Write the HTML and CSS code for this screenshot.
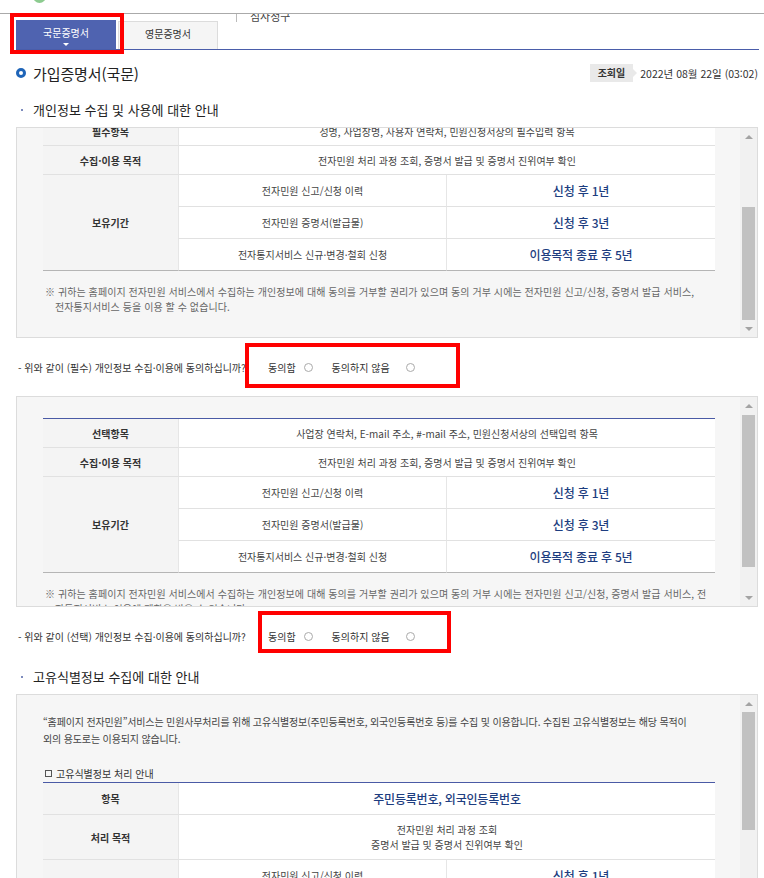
FILE: index.html
```html
<!DOCTYPE html>
<html lang="ko">
<head>
	<meta charset="UTF-8">
	<title>가입증명서(국문)</title>
	<link rel="stylesheet" href="styles.css">
</head>
<body>
	<div class="gnb"><span class="logo"></span></div>
	<div class="tabbar">
		<div class="tab on">국문증명서<i class="caret"></i></div>
		<div class="tab">영문증명서</div>
		<div class="submenu"><span>심사청구</span></div>
		<div class="mark mark-tab"></div>
	</div>

	<div class="wrap">
		<div class="tit">
			<h2><i class="ring"></i>가입증명서(국문)</h2>
			<div class="date"><span class="lbl">조회일</span><span class="tri"></span>2022년 08월 22일 (03:02)</div>
		</div>

		<h3 class="stit"><i class="dot"></i>개인정보 수집 및 사용에 대한 안내</h3>
		<div class="scrollbox">
			<div class="view">
				<div class="inner scrolled">
					<table class="tbl">
						<colgroup><col class="c1"><col class="c2"><col class="c3"></colgroup>
						<tr class="r1"><th>필수항목</th><td colspan="2">성명, 사업장명, 사용자 연락처, 민원신청서상의 필수입력 항목</td></tr>
						<tr class="r1"><th>수집·이용 목적</th><td colspan="2">전자민원 처리 과정 조회, 증명서 발급 및 증명서 진위여부 확인</td></tr>
						<tr class="r2"><th rowspan="3" class="last">보유기간</th><td>전자민원 신고/신청 이력</td><td class="val">신청 후 1년</td></tr>
						<tr class="r2"><td>전자민원 증명서(발급물)</td><td class="val">신청 후 3년</td></tr>
						<tr class="r2 last"><td>전자통지서비스 신규·변경·철회 신청</td><td class="val">이용목적 종료 후 5년</td></tr>
					</table>
					<p class="note">※ 귀하는 홈페이지 전자민원 서비스에서 수집하는 개인정보에 대해 동의를 거부할 권리가 있으며 동의 거부 시에는 전자민원 신고/신청, 증명서 발급 서비스,<br>전자통지서비스 등을 이용 할 수 없습니다.</p>
				</div>
			</div>
			<div class="sbar"><span class="up"></span><span class="track"><i class="thumb t1"></i></span><span class="down"></span></div>
		</div>

		<div class="agree">
			<span class="q">- 위와 같이 (필수) 개인정보 수집·이용에 동의하십니까?</span>
			<span>동의함</span><i class="radio"></i>
			<span class="opt2">동의하지 않음</span><i class="radio wide"></i>
			<div class="mark mark-a1"></div>
		</div>

		<div class="scrollbox">
			<div class="view">
				<div class="inner">
					<table class="tbl">
						<colgroup><col class="c1"><col class="c2"><col class="c3"></colgroup>
						<tr class="r1"><th>선택항목</th><td colspan="2">사업장 연락처, E-mail 주소, #-mail 주소, 민원신청서상의 선택입력 항목</td></tr>
						<tr class="r1"><th>수집·이용 목적</th><td colspan="2">전자민원 처리 과정 조회, 증명서 발급 및 증명서 진위여부 확인</td></tr>
						<tr class="r2"><th rowspan="3" class="last">보유기간</th><td>전자민원 신고/신청 이력</td><td class="val">신청 후 1년</td></tr>
						<tr class="r2"><td>전자민원 증명서(발급물)</td><td class="val">신청 후 3년</td></tr>
						<tr class="r2 last"><td>전자통지서비스 신규·변경·철회 신청</td><td class="val">이용목적 종료 후 5년</td></tr>
					</table>
					<p class="note">※ 귀하는 홈페이지 전자민원 서비스에서 수집하는 개인정보에 대해 동의를 거부할 권리가 있으며 동의 거부 시에는 전자민원 신고/신청, 증명서 발급 서비스, 전<br>자통지서비스 이용에 제한을 받을 수 있습니다.</p>
				</div>
			</div>
			<div class="sbar"><span class="up"></span><span class="track"><i class="thumb t2"></i></span><span class="down"></span></div>
		</div>

		<div class="agree">
			<span class="q">- 위와 같이 (선택) 개인정보 수집·이용에 동의하십니까?</span>
			<span>동의함</span><i class="radio"></i>
			<span class="opt2">동의하지 않음</span><i class="radio wide"></i>
			<div class="mark mark-a2"></div>
		</div>

		<h3 class="stit near"><i class="dot"></i>고유식별정보 수집에 대한 안내</h3>
		<div class="scrollbox">
			<div class="view">
				<div class="inner top">
					<p class="intro">“홈페이지 전자민원”서비스는 민원사무처리를 위해 고유식별정보(주민등록번호, 외국인등록번호 등)를 수집 및 이용합니다. 수집된 고유식별정보는 해당 목적이<br>외의 용도로는 이용되지 않습니다.</p>
					<p class="subt"><i class="sq"></i>고유식별정보 처리 안내</p>
					<table class="tbl">
						<colgroup><col class="c1"><col class="c2"><col class="c3"></colgroup>
						<tr class="r3"><th>항목</th><td colspan="2" class="val">주민등록번호, 외국인등록번호</td></tr>
						<tr class="r4"><th>처리 목적</th><td colspan="2">전자민원 처리 과정 조회<br>증명서 발급 및 증명서 진위여부 확인</td></tr>
						<tr class="r2"><th rowspan="3" class="last">보유기간</th><td>전자민원 신고/신청 이력</td><td class="val">신청 후 1년</td></tr>
						<tr class="r2"><td>전자민원 증명서(발급물)</td><td class="val">신청 후 3년</td></tr>
						<tr class="r2 last"><td>전자통지서비스 신규·변경·철회 신청</td><td class="val">이용목적 종료 후 5년</td></tr>
					</table>
				</div>
			</div>
			<div class="sbar"><span class="up"></span><span class="track"><i class="thumb t3"></i></span><span class="down"></span></div>
		</div>
	</div>
</body>
</html>
```

FILE: styles.css
```css
*{
	margin: 0;
	padding: 0;
}
body{
	font-family: "Noto Sans CJK KR", "Malgun Gothic", sans-serif;
	color: #333;
	background: #fff;
}
i{
	font-style: normal;
}

/* top strip */
.gnb{
	height: 13px;
	border-bottom: 1px solid #aaa;
	overflow: hidden;
}
.gnb .logo{
	display: block;
	width: 13px;
	height: 13px;
	border-radius: 50%;
	background: #8ccb8f;
	margin: -10px 0 0 33px;
}

/* tabs */
.tabbar{
	display: flex;
	align-items: flex-end;
	height: 35px;
	margin: 0 5px 0 16px;
	border-bottom: 1px solid #4a5daa;
	position: relative;
}
.tab{
	width: 100px;
	height: 28px;
	box-sizing: border-box;
	border: 1px solid #dcdcdc;
	border-bottom: none;
	background: #f5f5f5;
	margin-left: 2px;
	padding-top: 5px;
	font-size: 10px;
	line-height: 14px;
	text-align: center;
	color: #333;
}
.tab.on{
	height: 29px;
	border: none;
	background: #4f63b0;
	color: #fff;
	margin-left: 0;
	padding-top: 6px;
}
.tab .caret{
	display: block;
	width: 0;
	margin: 3px auto 0;
	border-left: 3px solid transparent;
	border-right: 3px solid transparent;
	border-top: 3px solid #fff;
}
.submenu{
	align-self: flex-start;
	height: 8px;
	overflow: hidden;
	border-left: 1px solid #bbb;
	margin-left: 18px;
	padding-left: 13px;
}
.submenu span{
	display: block;
	font-size: 11px;
	line-height: 11px;
	margin-top: -3px;
	color: #444;
}

/* red annotation boxes */
.mark{
	position: absolute;
	box-sizing: border-box;
	border: 4px solid #f00;
}
.mark-tab{
	left: -6px;
	top: -1px;
	width: 114px;
	height: 41px;
}
.mark-a1{
	left: 229px;
	top: 5px;
	width: 215px;
	height: 45px;
}
.mark-a2{
	left: 242px;
	top: 4px;
	width: 193px;
	height: 42px;
}

.wrap{
	margin: 0 6px 0 16px;
}

/* title */
.tit{
	display: flex;
	justify-content: space-between;
	align-items: center;
	height: 26px;
	margin-top: 10px;
}
.tit h2{
	display: flex;
	align-items: center;
	font-size: 15px;
	font-weight: 400;
	letter-spacing: -0.1px;
	color: #222;
}
.tit .ring{
	display: inline-block;
	width: 10px;
	height: 10px;
	box-sizing: border-box;
	border: 3px solid #1f65b8;
	border-radius: 50%;
	margin-right: 7px;
}
.date{
	display: flex;
	align-items: center;
	font-size: 10.5px;
	color: #333;
}
.date .lbl{
	height: 18px;
	line-height: 18px;
	padding: 0 8px;
	background: #e9e9e9;
	font-size: 10px;
	font-weight: 700;
}
.date .tri{
	width: 0;
	border-left: 4px solid #e9e9e9;
	border-top: 4px solid transparent;
	border-bottom: 4px solid transparent;
	margin-right: 3px;
}

/* section heading */
.stit{
	display: flex;
	align-items: center;
	margin: 14px 0 7px;
	padding-left: 5px;
	line-height: 20px;
	font-size: 13px;
	font-weight: 400;
	color: #222;
}
.stit.near{
	margin-top: 2px;
}
.stit .dot{
	width: 2px;
	height: 2px;
	background: #7d8bbd;
	margin-right: 10px;
}

/* fake scrolling boxes */
.scrollbox{
	display: flex;
	height: 211px;
	box-sizing: border-box;
	border: 1px solid #dcdcdc;
	background: #f6f6f6;
}
.view{
	flex: 1;
	overflow: hidden;
}
.inner{
	padding: 21px 25px 20px 26px;
}
.inner.scrolled{
	margin-top: -33px;
}
.inner.top{
	padding-top: 18px;
}
.sbar{
	width: 17px;
	display: flex;
	flex-direction: column;
	background: #f1f1f1;
}
.sbar .up,
.sbar .down{
	height: 17px;
	display: flex;
	align-items: center;
	justify-content: center;
}
.sbar .up:before,
.sbar .down:before{
	content: "";
	width: 0;
	border-left: 4px solid transparent;
	border-right: 4px solid transparent;
}
.sbar .up:before{
	border-bottom: 4px solid #a3a3a3;
}
.sbar .down:before{
	border-top: 4px solid #a3a3a3;
}
.sbar .track{
	flex: 1;
	display: block;
	overflow: hidden;
}
.thumb{
	display: block;
	margin: 0 2px;
	background: #c1c1c1;
}
.t1{
	margin-top: 62px;
	height: 113px;
}
.t2{
	margin-top: 1px;
	height: 152px;
}
.t3{
	height: 118px;
}

/* table */
.tbl{
	width: 100%;
	table-layout: fixed;
	border-collapse: separate;
	border-spacing: 0;
	border-top: 1px solid #4a5aa5;
	background: #fff;
	font-size: 10px;
}
.tbl .c1{
	width: 135px;
}
.tbl .c2{
	width: 268px;
}
.tbl th,
.tbl td{
	padding: 0;
	text-align: center;
	border-bottom: 1px solid #e1e1e1;
}
.tbl th{
	background: #f4f4f4;
	font-weight: 700;
	color: #333;
}
.tbl td{
	border-left: 1px solid #e6e6e6;
	color: #444;
	line-height: 15px;
}
.tbl .r1 th,
.tbl .r1 td{
	height: 28px;
}
.tbl .r2 th,
.tbl .r2 td{
	height: 31px;
}
.tbl .r3 th,
.tbl .r3 td{
	height: 31px;
}
.tbl .r4 th,
.tbl .r4 td{
	height: 44px;
}
.tbl .last td,
.tbl th.last{
	border-bottom-color: #b5b5b5;
}
.tbl td.val{
	font-size: 12px;
	font-weight: 500;
	letter-spacing: -0.2px;
	color: #1d3d80;
}

.note{
	padding: 13px 0 0 12px;
	text-indent: -10px;
	line-height: 15px;
	font-size: 10px;
	letter-spacing: 0.07px;
	color: #666;
	white-space: nowrap;
}
.intro{
	line-height: 17px;
	font-size: 10px;
	letter-spacing: -0.15px;
	color: #444;
	white-space: nowrap;
}
.subt{
	display: flex;
	align-items: center;
	margin-top: 18px;
	line-height: 17px;
	font-size: 10px;
	color: #333;
}
.subt .sq{
	width: 7px;
	height: 7px;
	box-sizing: border-box;
	border: 1px solid #555;
	margin: 0 4px 0 2px;
}

/* consent rows */
.agree{
	position: relative;
	display: flex;
	align-items: center;
	height: 58px;
	padding-left: 2px;
	font-size: 10px;
	color: #333;
}
.agree .q{
	width: 250px;
}
.agree .radio{
	display: inline-block;
	width: 9px;
	height: 9px;
	box-sizing: border-box;
	border: 1px solid #aaa;
	border-radius: 50%;
	background: #fff;
	margin-left: 8px;
}
.agree .radio.wide{
	margin-left: 16px;
}
.agree .opt2{
	margin-left: 19px;
}
```
